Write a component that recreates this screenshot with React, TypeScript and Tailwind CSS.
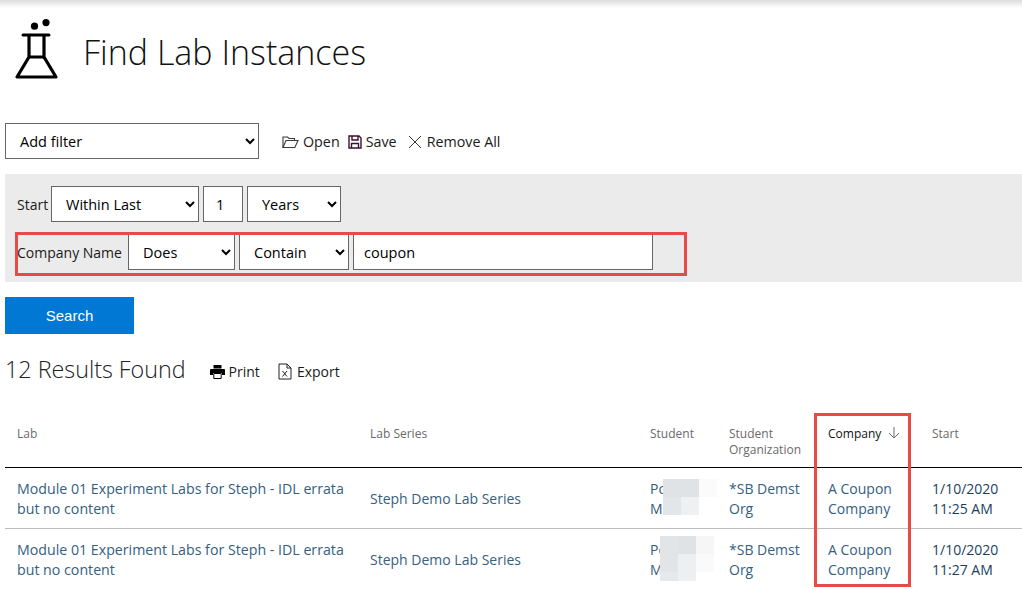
import React from 'react';

const font = "font-['Open_Sans','Noto_Sans',sans-serif]";

const FlaskIcon = () => (
  <svg width="44" height="62" viewBox="0 0 44 62" fill="none" className="shrink-0">
    <circle cx="20.5" cy="7.2" r="3.6" fill="#000" />
    <circle cx="32" cy="3.6" r="3.6" fill="#000" />
    <path d="M9 16 H35" stroke="#000" strokeWidth="3" strokeLinecap="round" />
    <path d="M15 16 V38 L3 58 H42 L30 38 V16" stroke="#000" strokeWidth="3.2" strokeLinejoin="round" />
    <path d="M15 38 H30" stroke="#000" strokeWidth="3" />
  </svg>
);

const FolderOpenIcon = () => (
  <svg width="17" height="14" viewBox="0 0 17 14" fill="none" stroke="#3a3a3a" strokeWidth="1.1">
    <path d="M1 12.5 V2 H5.5 L7 3.5 H12.5 V5.5" />
    <path d="M1 12.5 L4 5.5 H16 L12.8 12.5 Z" />
  </svg>
);

const SaveIcon = () => (
  <svg width="14" height="14" viewBox="0 0 14 14" fill="none" stroke="#3b1130" strokeWidth="1.4">
    <path d="M1 1 H11 L13 3 V13 H1 Z" />
    <path d="M4 1 V5 H10 V1" />
    <path d="M3.5 13 V8.5 H10.5 V13" />
  </svg>
);

const CloseIcon = () => (
  <svg width="14" height="14" viewBox="0 0 14 14" fill="none" stroke="#333" strokeWidth="1">
    <path d="M1 1 L13 13 M13 1 L1 13" />
  </svg>
);

const PrintIcon = () => (
  <svg width="15" height="14" viewBox="0 0 15 14">
    <path d="M3.5 0 H11.5 V3.5 H3.5 Z" fill="#000" />
    <path d="M1 4 H14 Q15 4 15 5 V10 H12 V8 H3 V10 H0 V5 Q0 4 1 4 Z" fill="#000" />
    <path d="M3.8 8.5 H11.2 V13.5 H3.8 Z" fill="#fff" stroke="#000" strokeWidth="1" />
  </svg>
);

const ExcelIcon = () => (
  <svg width="14" height="17" viewBox="0 0 14 17" fill="none" stroke="#222" strokeWidth="1">
    <path d="M1 1 H9 L13 5 V16 H1 Z" />
    <path d="M9 1 V5 H13" />
    <path d="M4.5 8 L9 13.5 M9 8 L4.5 13.5" />
  </svg>
);

const SortIcon = () => (
  <svg width="12" height="13" viewBox="0 0 12 13" fill="none" stroke="#6b6b6b" strokeWidth="1">
    <path d="M6 1 V12 M1 7 L6 12 L11 7" />
  </svg>
);

interface LabRow {
  time: string;
  mosaic: React.ReactNode;
}

const selectClass =
  'h-9 rounded-none border border-[#666] bg-white pl-[10px] text-[14.5px] text-black outline-none';

// pixelated patches over the student names
const MosaicOne = () => (
  <div className="absolute left-[13px] top-[9px] grid grid-cols-[18px_18px_18px] grid-rows-[18px_18px]">
    <div className="bg-[#dfe3e6]" />
    <div className="bg-[#dfe3e6]" />
    <div className="bg-[#fbfbfb]" />
    <div className="bg-[#e3e6e9]" />
    <div className="bg-[#eef0f2]" />
    <div className="bg-white" />
  </div>
);

const MosaicTwo = () => (
  <div className="absolute left-[10px] top-[5px] grid grid-cols-[18px_18px_18px] grid-rows-[18px_18px_9px]">
    <div className="bg-[#e2e5e8]" />
    <div className="bg-[#dfe3e6]" />
    <div className="bg-[#f6f6f6]" />
    <div className="bg-[#e2e5e8]" />
    <div className="bg-[#edeff1]" />
    <div className="bg-[#fafafa]" />
    <div className="bg-[#e6e9eb]" />
    <div className="bg-[#edeff1]" />
    <div className="bg-white" />
  </div>
);

const rows: LabRow[] = [
  { time: '11:25 AM', mosaic: <MosaicOne /> },
  { time: '11:27 AM', mosaic: <MosaicTwo /> },
];

const gridCols = 'grid grid-cols-[353px_280px_79px_99px_104px_1fr]';

export default function App() {
  return (
    <div className={`relative h-[589px] w-[1022px] overflow-hidden bg-white ${font} text-[15px] text-[#1a1a1a]`}>
      <div className="h-2 bg-gradient-to-b from-[#dcdcdc] to-white" />

      <div className="flex h-[88px] items-start pl-[14px] pt-[11px]">
        <FlaskIcon />
        <h1 className="ml-[25px] mt-[9px] text-[34px] font-light leading-[48px] text-[#111]">Find Lab Instances</h1>
      </div>

      <div className="mt-[27px] flex items-center pl-[5px]">
        <select defaultValue="Add filter" className={`${selectClass} w-[254px]`}>
          <option>Add filter</option>
        </select>
        <div className="ml-[23px] mt-px flex items-center text-[14.3px]">
          <span className="flex items-center gap-[4px]"><FolderOpenIcon /> Open</span>
          <span className="ml-[8px] flex items-center gap-[4px]"><SaveIcon /> Save</span>
          <span className="ml-[11px] flex items-center gap-[5px]"><CloseIcon /> Remove All</span>
        </div>
      </div>

      <div className="relative ml-[5px] mt-[15px] h-[108px] bg-[#ebebeb] pl-[12px] pt-[12px]">
        <div className="flex items-center gap-[4px]">
          <span className="w-[30px] text-[14px]">Start</span>
          <select defaultValue="Within Last" className={`${selectClass} w-[148px]`}>
            <option>Within Last</option>
          </select>
          <input readOnly value="1" className="h-9 w-10 rounded-none border border-[#666] bg-white px-3 text-[14.5px] text-black" />
          <select defaultValue="Years" className={`${selectClass} w-[94px]`}>
            <option>Years</option>
          </select>
        </div>
        <div className="mt-3 flex items-center gap-[4px]">
          <span className="w-[107px] text-[14px]">Company Name</span>
          <select defaultValue="Does" className={`${selectClass} w-[107px]`}>
            <option>Does</option>
          </select>
          <select defaultValue="Contain" className={`${selectClass} w-[110px]`}>
            <option>Contain</option>
          </select>
          <input readOnly value="coupon" className="h-9 w-[300px] rounded-none border border-[#666] bg-white px-[10px] text-[14.5px] text-black" />
        </div>
        <div className="absolute left-[10px] top-[58px] h-[44px] w-[672px] border-[3px] border-[#e84a45]" />
      </div>

      <button className="ml-[5px] mt-[15px] block h-[37px] w-[129px] bg-[#0078d4] pt-px font-['Liberation_Sans',sans-serif] text-[15px] text-white">
        Search
      </button>

      <div className="mt-[17px] flex items-center pl-[5px]">
        <h2 className="text-[23.3px] font-light leading-[36px] text-[#222]">12 Results Found</h2>
        <div className="ml-[24px] mt-[5px] flex items-center text-[14px]">
          <span className="flex items-center gap-[4px]"><PrintIcon /> Print</span>
          <span className="ml-[18px] flex items-center gap-[5px]"><ExcelIcon /> Export</span>
        </div>
      </div>

      <div className="relative ml-[5px] mt-[25px]">
        <div className={`${gridCols} h-[56px] border-b border-black pl-[12px] pt-[14px] text-[12px] leading-4 text-[#6a6a6a]`}>
          <div>Lab</div>
          <div>Lab Series</div>
          <div>Student</div>
          <div>Student<br />Organization</div>
          <div className="flex items-start gap-[7px] text-[#111]">Company <SortIcon /></div>
          <div>Start</div>
        </div>
        {rows.map((row) => (
          <div key={row.time} className={`${gridCols} h-[61px] items-center border-b border-[#bdbdbd] pl-[12px] pt-[2px] text-[14px] leading-5 text-[#35607f]`}>
            <div className="text-[14.2px]">Module 01 Experiment Labs for Steph - IDL errata<br />but no content</div>
            <div>Steph Demo Lab Series</div>
            <div className="relative h-full">
              <div className="pt-[9px] text-[#3a5a75]">Po<br />M</div>
              {row.mosaic}
            </div>
            <div>*SB Demst<br />Org</div>
            <div>A Coupon<br />Company</div>
            <div className="text-[#1b3f5e]">1/10/2020<br />{row.time}</div>
          </div>
        ))}
        <div className="absolute left-[809px] top-[1px] h-[174px] w-[97px] border-[3px] border-[#e84a45]" />
      </div>
    </div>
  );
}
